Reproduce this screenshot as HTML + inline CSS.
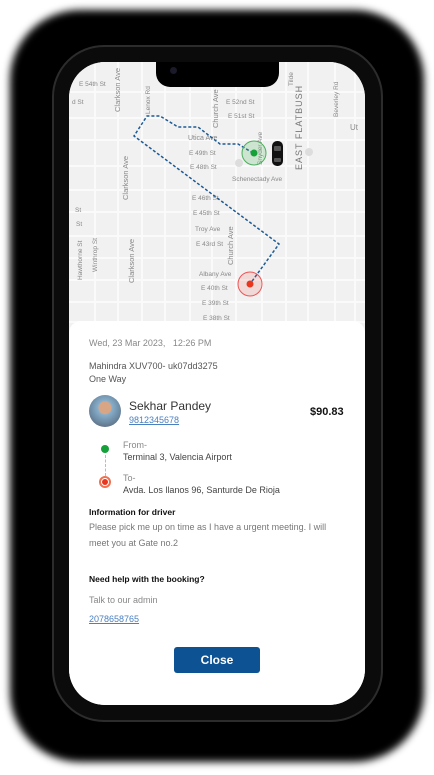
<!DOCTYPE html>
<html><head><meta charset="utf-8"><style>
*{margin:0;padding:0;box-sizing:border-box}
body{width:434px;height:775px;background:#fff;position:relative;overflow:hidden;font-family:"Liberation Sans",sans-serif}
.shadow{position:absolute;left:10px;top:10px;width:414px;height:752px;background:#000;border-radius:70px;filter:blur(4px)}
.phone{position:absolute;left:52px;top:45px;width:331px;height:677px;background:#0b0b0b;border-radius:52px;border:2px solid #2c2c2c}
.screen{position:absolute;left:69px;top:62px;width:296px;height:643px;background:#fff;border-radius:36px;overflow:hidden}
.t{position:absolute;white-space:nowrap;font-size:9px;color:#666}
.a{position:absolute}
</style></head><body>
<div class="shadow"></div>
<div class="phone"></div>
<div class="screen">
<svg class="a" style="left:0;top:0" width="296" height="270" viewBox="69 62 296 270">
<rect x="69" y="62" width="296" height="270" fill="#f1f1f1"/>
<g stroke="#fafafa" stroke-width="2" fill="none">
<path d="M69 92H365M69 118H365M69 140H365M69 166H365M69 190H365M69 212H365M69 236H365M69 258H365M69 280H365M69 302H365M69 322H365"/>
<path d="M95 62V330M118 62V330M142 62V330M165 62V330M190 62V330M212 62V330M236 62V330M262 62V330M286 62V330M308 62V330M335 62V330M355 62V330"/>
</g>
<g font-family="Liberation Sans" font-size="6.5" fill="#888">
<text x="79" y="86">E 54th St</text><text x="72" y="104">d St</text>
<text x="226" y="104">E 52nd St</text><text x="228" y="118">E 51st St</text>
<text x="188" y="140" font-size="7">Utica Ave</text>
<text x="189" y="155">E 49th St</text><text x="190" y="169">E 48th St</text>
<text x="232" y="181">Schenectady Ave</text>
<text x="192" y="200">E 46th St</text><text x="193" y="215">E 45th St</text>
<text x="195" y="231">Troy Ave</text><text x="196" y="246">E 43rd St</text>
<text x="199" y="276">Albany Ave</text><text x="201" y="290">E 40th St</text>
<text x="202" y="305">E 39th St</text><text x="203" y="320">E 38th St</text>
<text x="75" y="212">St</text><text x="76" y="226">St</text>
<text x="120" y="112" transform="rotate(-90 120 112)" font-size="7.5">Clarkson Ave</text>
<text x="128" y="200" transform="rotate(-90 128 200)" font-size="7.5">Clarkson Ave</text>
<text x="134" y="283" transform="rotate(-90 134 283)" font-size="7.5">Clarkson Ave</text>
<text x="218" y="128" transform="rotate(-90 218 128)" font-size="7.5">Church Ave</text>
<text x="233" y="265" transform="rotate(-90 233 265)" font-size="7.5">Church Ave</text>
<text x="150" y="114" transform="rotate(-90 150 114)">Lenox Rd</text>
<text x="82" y="280" transform="rotate(-90 82 280)">Hawthorne St</text>
<text x="97" y="272" transform="rotate(-90 97 272)">Winthrop St</text>
<text x="302" y="170" transform="rotate(-90 302 170)" font-size="9" letter-spacing="1" fill="#777">EAST FLATBUSH</text>
<text x="338" y="117" transform="rotate(-90 338 117)">Beverley Rd</text>
<text x="293" y="86" transform="rotate(-90 293 86)">Tilde</text>
<text x="262" y="165" transform="rotate(-90 262 165)">Snyder Ave</text>
<text x="350" y="130" font-size="8">Ut</text>
</g>
<path d="M253 153L238 144H220L198 127H178L160 116H147L134 136L279 244L250 284" fill="none" stroke="#1d5a94" stroke-width="1.5" stroke-dasharray="3 2"/>
<circle cx="254" cy="153" r="12" fill="rgba(60,180,80,.2)" stroke="#4cae5c" stroke-width="1"/>
<circle cx="254" cy="153" r="3.5" fill="#16a03a"/>
<circle cx="250" cy="284" r="12" fill="rgba(240,80,70,.15)" stroke="#e55" stroke-width="1"/>
<circle cx="250" cy="284" r="3.5" fill="#e8361f"/>
<rect x="272" y="141" width="11" height="25" rx="5" fill="#111"/>
<rect x="274" y="146" width="7" height="5" rx="1" fill="#555"/>
<rect x="274" y="158" width="7" height="4" rx="1" fill="#555"/>
<circle cx="239" cy="163" r="4" fill="#ddd"/><circle cx="309" cy="152" r="4" fill="#ddd"/>
</svg>
<div class="a" style="left:87px;top:0;width:123px;height:25px;background:#000;border-radius:0 0 14px 14px"></div>
<div class="a" style="left:101px;top:5px;width:7px;height:7px;background:#1a1a2a;border-radius:50%"></div>
<div class="a" style="left:0;top:259px;width:296px;height:390px;background:#fff;border-radius:12px 12px 0 0"></div>
</div>
<div class="t" style="left:89px;top:338px;color:#888">Wed, 23 Mar 2023,&nbsp;&nbsp; 12:26 PM</div>
<div class="t" style="left:89px;top:361px;color:#555">Mahindra XUV700- uk07dd3275</div>
<div class="t" style="left:89px;top:374px;color:#555">One Way</div>
<div class="a" style="left:89px;top:395px;width:32px;height:32px;border-radius:50%;background:radial-gradient(circle at 50% 40%,#d8a585 0 25%,#8ab0cc 27%,#6c8aa3 60%,#556 100%)"></div>
<div class="t" style="left:129px;top:399px;font-size:12px;color:#333">Sekhar Pandey</div>
<div class="t" style="left:129px;top:415px;color:#4a7fc0;text-decoration:underline">9812345678</div>
<div class="t" style="left:310px;top:406px;font-size:11px;font-weight:bold;color:#111">$90.83</div>
<div class="a" style="left:101px;top:445px;width:8px;height:8px;border-radius:50%;background:#16a03a"></div>
<div class="a" style="left:105px;top:455px;height:21px;border-left:1px dashed #bbb"></div>
<div class="a" style="left:99px;top:476px;width:12px;height:12px;border-radius:50%;border:2px solid #f07050;background:#fff"></div>
<div class="a" style="left:102px;top:479px;width:6px;height:6px;border-radius:50%;background:#e8361f"></div>
<div class="t" style="left:123px;top:440px;color:#888">From-</div>
<div class="t" style="left:123px;top:452px;color:#444">Terminal 3, Valencia Airport</div>
<div class="t" style="left:123px;top:473px;color:#888">To-</div>
<div class="t" style="left:123px;top:485px;color:#444">Avda. Los llanos 96, Santurde De Rioja</div>
<div class="t" style="left:89px;top:507px;color:#111;font-weight:bold;font-size:8.5px">Information for driver</div>
<div class="t" style="left:89px;top:522px;color:#777">Please pick me up on time as I have a urgent meeting. I will</div>
<div class="t" style="left:89px;top:538px;color:#777">meet you at Gate no.2</div>
<div class="t" style="left:89px;top:574px;color:#111;font-weight:bold;font-size:8.5px">Need help with the booking?</div>
<div class="t" style="left:89px;top:595px;color:#888">Talk to our admin</div>
<div class="t" style="left:89px;top:614px;color:#4a7fc0;text-decoration:underline">2078658765</div>
<div class="a" style="left:174px;top:647px;width:86px;height:26px;background:#0d5394;border-radius:3px;color:#fff;font-weight:bold;font-size:12px;text-align:center;line-height:26px">Close</div>
</body></html>
